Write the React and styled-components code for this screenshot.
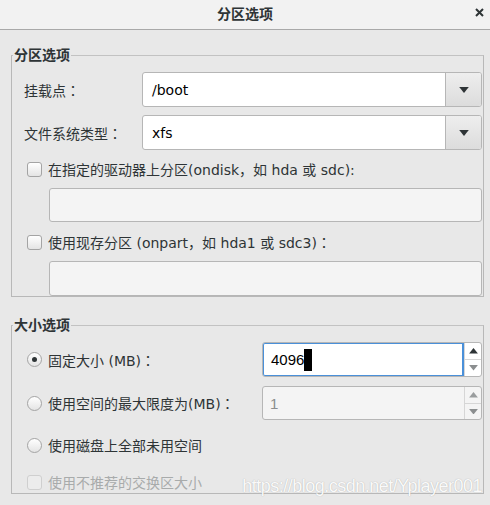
import React from 'react';
import styled, { createGlobalStyle } from 'styled-components';

const GlobalStyle = createGlobalStyle`
  html, body {
    margin: 0;
    padding: 0;
    background: #e8e8e8;
  }
  body {
    font-family: "DejaVu Sans", "Noto Sans CJK SC", sans-serif;
    font-size: 14px;
    color: #2e3436;
  }
`;

const Dialog = styled.div`
  position: relative;
  width: 490px;
  height: 505px;
  background: #e8e8e8;
  overflow: hidden;
`;

const TitleBar = styled.div`
  height: 29px;
  background: #f2f2f2;
  border-bottom: 1px solid #a9a9a9;
  display: flex;
  align-items: center;
  justify-content: center;
  position: relative;
`;

const TitleText = styled.div`
  font-weight: bold;
  font-size: 14px;
  color: #2e3436;
  margin-top: -4px;
`;

const CloseButton = styled.div`
  position: absolute;
  right: 6px;
  top: 8px;
  width: 9px;
  height: 9px;
  display: flex;
`;

const Frame = styled.fieldset`
  margin: ${(p) => p.$top}px 6px 0 11px;
  padding: 0 1px ${(p) => p.$bottom}px 15px;
  border: 1px solid #b8b8b8;
  border-top-color: #c2c2c2;
  min-width: 0;
  display: flex;
  flex-direction: column;
`;

const Legend = styled.legend`
  margin-left: -14px;
  padding: 0 1px;
  font-weight: bold;
  font-size: 14px;
  line-height: 20px;
  color: #2e3436;
`;

const Colon = styled.span`
  font-family: "Noto Sans CJK TC", sans-serif;
`;

const FieldRow = styled.div`
  display: flex;
  align-items: center;
  margin-top: ${(p) => p.$gap}px;
  margin-left: -3px;
`;

const FieldLabel = styled.div`
  width: 118px;
`;

const Combo = styled.div`
  flex: 1;
  height: 35px;
  display: flex;
  box-sizing: border-box;
  border: 1px solid #b6b6b6;
  border-radius: 3px;
  background: #fff;
  overflow: hidden;
`;

const ComboValue = styled.div`
  flex: 1;
  display: flex;
  align-items: center;
  padding-left: 9px;
  color: #000;
`;

const ComboButton = styled.div`
  width: 35px;
  border-left: 1px solid #b6b6b6;
  background: linear-gradient(#eeeeee, #dcdcdc);
  display: flex;
  align-items: center;
  justify-content: center;
`;

const CheckRow = styled.label`
  display: flex;
  align-items: center;
  height: 20px;
  margin-top: ${(p) => p.$gap}px;
  color: ${(p) => (p.$disabled ? '#a8abab' : '#2e3436')};
`;

const CheckBox = styled.span`
  width: 15px;
  height: 15px;
  box-sizing: border-box;
  border: 1px solid ${(p) => (p.$disabled ? '#cfcfcf' : '#a4a4a4')};
  border-radius: 3px;
  background: ${(p) => (p.$disabled ? '#ececec' : 'linear-gradient(#ffffff, #e4e4e4)')};
  margin-right: 6px;
  flex-shrink: 0;
`;

const Radio = styled.span`
  width: 15px;
  height: 15px;
  box-sizing: border-box;
  border: 1px solid #a4a4a4;
  border-radius: 50%;
  background: linear-gradient(#ffffff, #e4e4e4);
  margin-right: 6px;
  flex-shrink: 0;
  display: flex;
  align-items: center;
  justify-content: center;
  &::after {
    content: '';
    width: 5px;
    height: 5px;
    border-radius: 50%;
    background: ${(p) => (p.$checked ? '#2e3436' : 'transparent')};
  }
`;

const Entry = styled.div`
  height: ${(p) => p.$h}px;
  margin: ${(p) => p.$gap}px 0 0 22px;
  box-sizing: border-box;
  border: 1px solid #b6b6b6;
  border-radius: 3px;
  background: #f4f4f4;
`;

const SizeRow = styled.div`
  display: flex;
  align-items: center;
  justify-content: space-between;
  margin-top: ${(p) => p.$gap}px;
`;

const Spin = styled.div`
  width: 220px;
  height: ${(p) => p.$h}px;
  display: flex;
  box-sizing: border-box;
  border-radius: 3px;
  background: ${(p) => (p.$disabled ? '#f4f4f4' : '#fff')};
  border: 1px solid #b6b6b6;
  overflow: hidden;
`;

const SpinInput = styled.div`
  flex: 1;
  display: flex;
  align-items: center;
  padding-left: ${(p) => (p.$focused ? 7 : 8)}px;
  box-sizing: border-box;
  margin: -1px 0 -1px -1px;
  border: ${(p) => (p.$focused ? '2px solid #4a90d9' : 'none')};
  border-radius: 3px 0 0 3px;
  color: ${(p) => (p.$disabled ? '#8b8e8f' : '#000')};
  font-family: "Liberation Sans", sans-serif;
  font-size: 15px;
`;

const Cursor = styled.span`
  display: inline-block;
  width: 8px;
  height: 22px;
  background: #000;
`;

const SpinButtons = styled.div`
  width: 16px;
  border-left: 1px solid #d6d6d6;
  display: flex;
  flex-direction: column;
`;

const SpinHalf = styled.div`
  flex: 1;
  display: flex;
  align-items: center;
  justify-content: center;
  & + & {
    border-top: 1px solid #d6d6d6;
  }
`;

const Watermark = styled.div`
  position: absolute;
  right: 8px;
  bottom: 8px;
  font-family: "Liberation Sans", sans-serif;
  font-size: 18px;
  letter-spacing: -0.5px;
  color: rgba(255, 255, 255, 0.95);
  text-shadow: 0 0 1px rgba(90, 90, 90, 0.45);
`;

const Arrow = ({ up, color = '#2e3436', w = 8 }) => (
  <svg width={w} height={w / 2 + 1} viewBox="0 0 8 5">
    <path d={up ? 'M0 5 L4 0 L8 5 Z' : 'M0 0 L8 0 L4 5 Z'} fill={color} />
  </svg>
);

const SpinBox = ({ value, focused, disabled, h }) => (
  <Spin $h={h} $disabled={disabled}>
    <SpinInput $focused={focused} $disabled={disabled}>
      {value}
      {focused && <Cursor />}
    </SpinInput>
    <SpinButtons>
      <SpinHalf>
        <Arrow up w={9} color={disabled ? '#9a9d9e' : '#2e3436'} />
      </SpinHalf>
      <SpinHalf>
        <Arrow w={9} color="#8b8e8f" />
      </SpinHalf>
    </SpinButtons>
  </Spin>
);

export default function App() {
  return (
    <>
      <GlobalStyle />
      <Dialog>
        <TitleBar>
          <TitleText>分区选项</TitleText>
          <CloseButton>
            <svg width="9" height="9" viewBox="0 0 9 9">
              <path d="M1 1 L8 8 M8 1 L1 8" stroke="#2e3436" strokeWidth="2" />
            </svg>
          </CloseButton>
        </TitleBar>

        <Frame $top={15} $bottom={0}>
          <Legend>分区选项</Legend>
          <FieldRow $gap={7}>
            <FieldLabel>挂载点<Colon>：</Colon></FieldLabel>
            <Combo>
              <ComboValue>/boot</ComboValue>
              <ComboButton>
                <Arrow w={10} />
              </ComboButton>
            </Combo>
          </FieldRow>
          <FieldRow $gap={8}>
            <FieldLabel>文件系统类型<Colon>：</Colon></FieldLabel>
            <Combo>
              <ComboValue>xfs</ComboValue>
              <ComboButton>
                <Arrow w={10} />
              </ComboButton>
            </Combo>
          </FieldRow>
          <CheckRow $gap={9}>
            <CheckBox />
            在指定的驱动器上分区(ondisk，如 hda 或 sdc):
          </CheckRow>
          <Entry $gap={9} $h={34} />
          <CheckRow $gap={10}>
            <CheckBox />
            使用现存分区 (onpart，如 hda1 或 sdc3)<Colon>：</Colon>
          </CheckRow>
          <Entry $gap={9} $h={35} />
        </Frame>

        <Frame $top={18} $bottom={1}>
          <Legend>大小选项</Legend>
          <SizeRow $gap={7}>
            <CheckRow $gap={0}>
              <Radio $checked />
              固定大小 (MB)<Colon>：</Colon>
            </CheckRow>
            <SpinBox value="4096" focused h={35} />
          </SizeRow>
          <SizeRow $gap={9}>
            <CheckRow $gap={0}>
              <Radio />
              使用空间的最大限度为(MB)<Colon>：</Colon>
            </CheckRow>
            <SpinBox value="1" disabled h={34} />
          </SizeRow>
          <CheckRow $gap={15}>
            <Radio />
            使用磁盘上全部未用空间
          </CheckRow>
          <CheckRow $gap={17} $disabled>
            <CheckBox $disabled />
            使用不推荐的交换区大小
          </CheckRow>
        </Frame>

        <Watermark>https://blog.csdn.net/Yplayer001</Watermark>
      </Dialog>
    </>
  );
}
